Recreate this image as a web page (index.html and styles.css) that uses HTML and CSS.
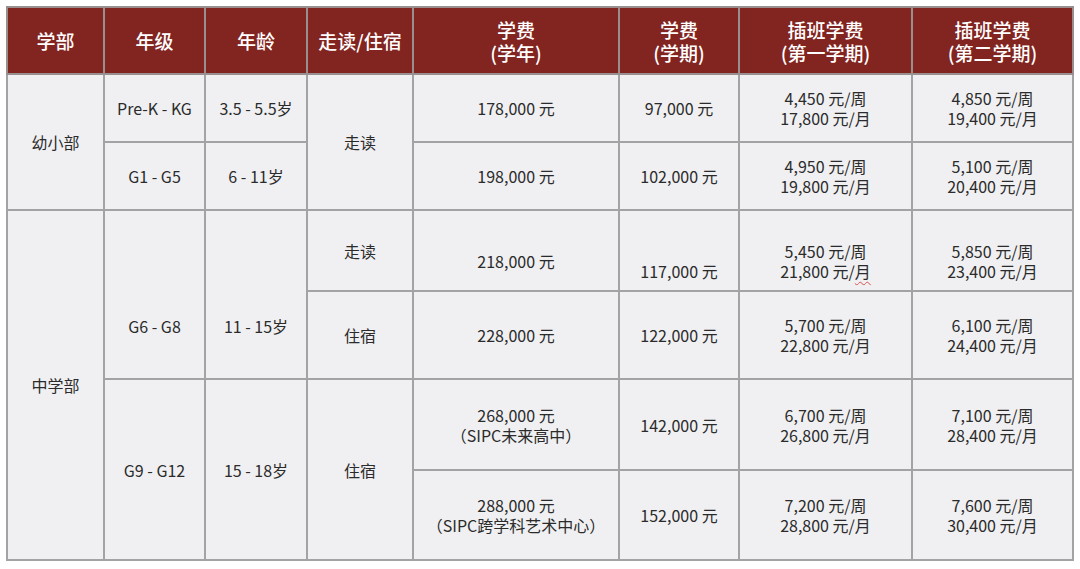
FILE: index.html
```html
<!DOCTYPE html>
<html lang="zh-CN">
<head>
<meta charset="utf-8">
<title>学费</title>
<link rel="stylesheet" href="styles.css">
</head>
<body>
<div class="page">
<table class="fees">
  <colgroup>
    <col class="c1"><col class="c2"><col class="c3"><col class="c4"><col class="c5"><col class="c6"><col class="c7"><col class="c8">
  </colgroup>
  <thead>
    <tr class="r-head">
      <th>学部</th>
      <th>年级</th>
      <th>年龄</th>
      <th>走读/住宿</th>
      <th><span class="ln">学费</span><span class="ln">(学年)</span></th>
      <th><span class="ln">学费</span><span class="ln">(学期)</span></th>
      <th><span class="ln">插班学费</span><span class="ln">(第一学期)</span></th>
      <th><span class="ln">插班学费</span><span class="ln">(第二学期)</span></th>
    </tr>
  </thead>
  <tbody>
    <tr class="r1">
      <td rowspan="2">幼小部</td>
      <td>Pre-K - KG</td>
      <td>3.5 - 5.5岁</td>
      <td rowspan="2">走读</td>
      <td>178,000 元</td>
      <td>97,000 元</td>
      <td><span class="ln">4,450 元/周</span><span class="ln">17,800 元/月</span></td>
      <td><span class="ln">4,850 元/周</span><span class="ln">19,400 元/月</span></td>
    </tr>
    <tr class="r2">
      <td>G1 - G5</td>
      <td>6 - 11岁</td>
      <td>198,000 元</td>
      <td>102,000 元</td>
      <td><span class="ln">4,950 元/周</span><span class="ln">19,800 元/月</span></td>
      <td><span class="ln">5,100 元/周</span><span class="ln">20,400 元/月</span></td>
    </tr>
    <tr class="r3">
      <td rowspan="4">中学部</td>
      <td rowspan="2" class="low">G6 - G8</td>
      <td rowspan="2" class="low">11 - 15岁</td>
      <td>走读</td>
      <td class="off1">218,000 元</td>
      <td class="off2">117,000 元</td>
      <td class="off1"><span class="ln">5,450 元/周</span><span class="ln">21,800 元/<span class="spell">月</span></span></td>
      <td class="off1"><span class="ln">5,850 元/周</span><span class="ln">23,400 元/月</span></td>
    </tr>
    <tr class="r4">
      <td>住宿</td>
      <td>228,000 元</td>
      <td>122,000 元</td>
      <td><span class="ln">5,700 元/周</span><span class="ln">22,800 元/月</span></td>
      <td><span class="ln">6,100 元/周</span><span class="ln">24,400 元/月</span></td>
    </tr>
    <tr class="r5">
      <td rowspan="2">G9 - G12</td>
      <td rowspan="2">15 - 18岁</td>
      <td rowspan="2">住宿</td>
      <td><span class="ln">268,000 元</span><span class="ln">（SIPC未来高中）</span></td>
      <td>142,000 元</td>
      <td><span class="ln">6,700 元/周</span><span class="ln">26,800 元/月</span></td>
      <td><span class="ln">7,100 元/周</span><span class="ln">28,400 元/月</span></td>
    </tr>
    <tr class="r6">
      <td><span class="ln">288,000 元</span><span class="ln">（SIPC跨学科艺术中心）</span></td>
      <td>152,000 元</td>
      <td><span class="ln">7,200 元/周</span><span class="ln">28,800 元/月</span></td>
      <td><span class="ln">7,600 元/周</span><span class="ln">30,400 元/月</span></td>
    </tr>
  </tbody>
</table>
</div>
</body>
</html>
```

FILE: styles.css
```css
html, body {
  margin: 0;
  padding: 0;
  background: #ffffff;
}

.page {
  padding: 6px 0 0 6px;
}

.fees {
  border-collapse: collapse;
  table-layout: fixed;
  width: 1066px;
  font-family: "Noto Sans CJK SC", "Noto Sans", sans-serif;
  color: #2b2b2b;
  font-size: 16px;
  line-height: 20px;
  text-align: center;
}

.c1 { width: 97px; }
.c2 { width: 101px; }
.c3 { width: 102px; }
.c4 { width: 106px; }
.c5 { width: 206px; }
.c6 { width: 120px; }
.c7 { width: 173px; }
.c8 { width: 161px; }

.fees th,
.fees td {
  border: 2px solid #a3a3a5;
  padding: 0;
  vertical-align: middle;
}

.fees th {
  background: #82241f;
  color: #ffffff;
  font-size: 19px;
  line-height: 24px;
  font-weight: 500;
  border-color: #9a8f8f;
}

.fees td {
  background: #f0f0f2;
}

.ln {
  display: block;
  height: 20px;
  line-height: 20px;
  overflow: visible;
}

.fees th .ln {
  height: 23px;
  line-height: 23px;
}

.r-head { height: 67px; }
.r1 { height: 68px; }
.r2 { height: 68px; }
.r3 { height: 81px; }
.r4 { height: 88px; }
.r5 { height: 91px; }
.r6 { height: 90px; }

.fees td.low { padding-top: 62px; }
.fees td.off1 { padding-top: 20px; }
.fees td.off2 { padding-top: 40px; }

.spell {
  text-decoration: underline wavy #d9534f;
  text-decoration-thickness: 1px;
  text-underline-offset: 3px;
}
```
